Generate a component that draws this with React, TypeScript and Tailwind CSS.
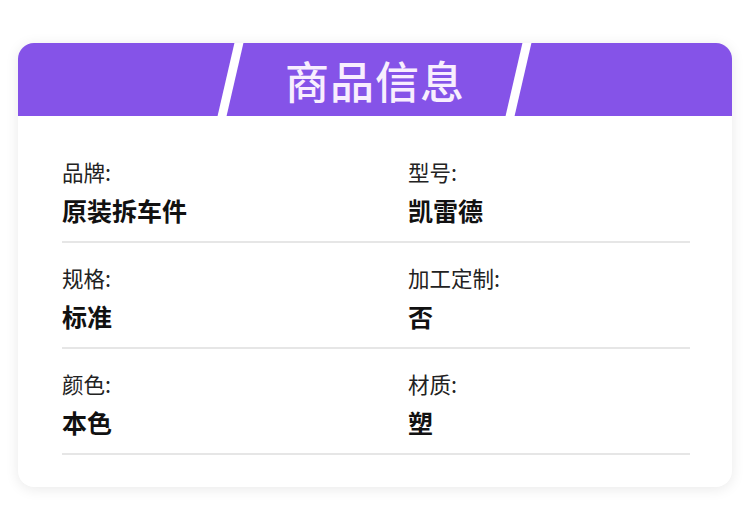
import React from "react";

const rows = [
  [
    { label: "品牌:", value: "原装拆车件" },
    { label: "型号:", value: "凯雷德" },
  ],
  [
    { label: "规格:", value: "标准" },
    { label: "加工定制:", value: "否" },
  ],
  [
    { label: "颜色:", value: "本色" },
    { label: "材质:", value: "塑" },
  ],
];

export default function App() {
  return (
    <div
      className="w-[750px] h-[530px] bg-white pt-[43px] px-[18px]"
      style={{ fontFamily: '"Noto Sans CJK SC", "Noto Sans", sans-serif' }}
    >
      <div className="w-[714px] h-[444px] bg-white rounded-[16px] overflow-hidden shadow-[0_2px_14px_rgba(0,0,0,0.09)]">
        <div className="relative h-[73px] bg-[#8553e8] flex items-center justify-center overflow-hidden">
          <div className="absolute top-0 bottom-0 left-[208px] w-[9px] bg-white skew-x-[-13deg]" />
          <div className="absolute top-0 bottom-0 left-[496px] w-[9px] bg-white skew-x-[-13deg]" />
          <span className="relative text-[44px] leading-none font-medium text-[#f8eefe] tracking-[1px] mt-[1px]">
            商品信息
          </span>
        </div>
        <div className="pl-[44px] pr-[42px] pt-[21px]">
          {rows.map((row, i) => (
            <div key={i} className="border-b-2 border-[#e6e6e6] grid grid-cols-[346px_1fr] pt-[21px] pb-[14px]">
              {row.map((c) => (
                <div key={c.label} className="flex flex-col gap-[8px]">
                  <div className="text-[21.5px] leading-[28px] text-[#222]">{c.label}</div>
                  <div className="text-[25px] leading-[33px] font-bold text-[#111]">{c.value}</div>
                </div>
              ))}
            </div>
          ))}
        </div>
      </div>
    </div>
  );
}
